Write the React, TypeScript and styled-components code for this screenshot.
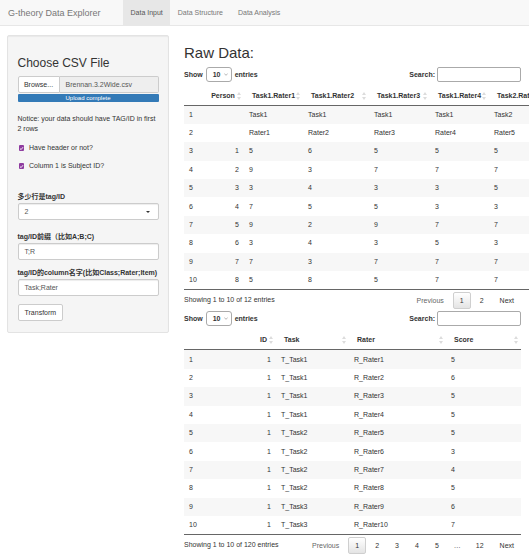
import React from "react";
import styled, { createGlobalStyle, css } from "styled-components";

const GlobalStyle = createGlobalStyle`
  html, body {
    margin: 0;
    padding: 0;
    overflow: hidden;
    background: #fff;
    font-family: "Liberation Sans", Helvetica, Arial, "Noto Sans CJK SC", sans-serif;
    font-size: 7px;
    color: #333;
  }
  * { box-sizing: border-box; }
`;

const Navbar = styled.nav`
  display: flex;
  align-items: stretch;
  height: 26px;
  background: #f8f8f8;
  border-bottom: 1px solid #e7e7e7;
`;

const Brand = styled.div`
  display: flex;
  align-items: center;
  padding-left: 8px;
  width: 123px;
  font-size: 9px;
  color: #777;
`;

const NavTab = styled.div<{ $active?: boolean }>`
  display: flex;
  align-items: center;
  padding: 0 7.5px;
  font-size: 7px;
  color: #777;
  ${(p) =>
    p.$active &&
    css`
      background: #e7e7e7;
      color: #555;
    `}
`;

const Page = styled.div`
  display: flex;
  align-items: flex-start;
  padding: 9px 8px 0 7px;
`;

const WellPanel = styled.aside`
  flex: none;
  width: 162px;
  background: #f5f5f5;
  border: 1px solid #e3e3e3;
  border-radius: 2px;
  box-shadow: inset 0 1px 1px rgba(0, 0, 0, 0.05);
  padding: 9.5px 9.5px 11px;
  display: flex;
  flex-direction: column;
`;

const PanelTitle = styled.h3`
  margin: 11px 0 6.5px;
  font-size: 12px;
  font-weight: 500;
  line-height: 13px;
  color: #333;
`;

const FileRow = styled.div`
  display: flex;
  height: 17px;
`;

const BrowseButton = styled.div`
  width: 42px;
  display: flex;
  align-items: center;
  justify-content: center;
  background: #fff;
  border: 1px solid #ccc;
  border-radius: 2px 0 0 2px;
  color: #333;
`;

const FileName = styled.div`
  flex: 1;
  display: flex;
  align-items: center;
  padding-left: 6px;
  background: #eee;
  border: 1px solid #ccc;
  border-left: none;
  border-radius: 0 2px 2px 0;
  color: #555;
`;

const Progress = styled.div`
  margin-top: 1px;
  height: 8px;
  background: #337ab7;
  border-radius: 1px;
  color: #fff;
  font-size: 6px;
  line-height: 8px;
  text-align: center;
`;

const Notice = styled.p`
  margin: 12px 0 0;
  line-height: 10px;
`;

const CheckRow = styled.label<{ $gap: number }>`
  display: flex;
  align-items: center;
  margin-top: ${(p) => p.$gap}px;
  line-height: 10px;
`;

const CheckBox = styled.span`
  width: 5.5px;
  height: 5.5px;
  margin: 0 5px 0 1px;
  border-radius: 1px;
  background: #8e3b9f;
  display: inline-flex;
  align-items: center;
  justify-content: center;
`;

const FieldLabel = styled.div<{ $top: number }>`
  margin-top: ${(p) => p.$top}px;
  margin-bottom: 1px;
  font-weight: bold;
  line-height: 10px;
  font-family: "Liberation Sans", Arial, "Noto Sans CJK SC", sans-serif;
`;

const TextBox = styled.div`
  position: relative;
  height: 17px;
  display: flex;
  align-items: center;
  padding: 0 6px;
  background: #fff;
  border: 1px solid #ccc;
  border-radius: 2px;
  box-shadow: inset 0 1px 1px rgba(0, 0, 0, 0.075);
  color: #555;
`;

const Caret = styled.span`
  position: absolute;
  right: 8px;
  top: 7px;
  width: 0;
  height: 0;
  border-left: 2.5px solid transparent;
  border-right: 2.5px solid transparent;
  border-top: 2.5px solid #333;
`;

const Button = styled.button`
  align-self: flex-start;
  margin-top: 8px;
  height: 17px;
  padding: 0 6px;
  background: #fff;
  border: 1px solid #ccc;
  border-radius: 2px;
  font-family: inherit;
  font-size: 7px;
  color: #333;
`;

const Main = styled.main`
  flex: none;
  width: 337px;
  margin-left: 15px;
  display: flex;
  flex-direction: column;
`;

const Heading = styled.h2`
  margin: 10px 0 5px;
  font-size: 15px;
  font-weight: 500;
  line-height: 16.5px;
  color: #333;
`;

const ControlRow = styled.div<{ $top?: number }>`
  display: flex;
  align-items: center;
  justify-content: space-between;
  height: 15px;
  margin-top: ${(p) => p.$top ?? 0}px;
`;

const LengthControl = styled.div`
  display: flex;
  align-items: center;
  font-weight: bold;
  gap: 3px;
`;

const SmallSelect = styled.div`
  width: 26px;
  height: 15px;
  display: flex;
  align-items: center;
  justify-content: space-between;
  padding: 0 3px 0 6px;
  border: 1px solid #aaa;
  border-radius: 3px;
  background: #fff;
  font-weight: bold;
`;

const SearchControl = styled.div`
  display: flex;
  align-items: center;
  gap: 2px;
  font-weight: bold;
`;

const SearchInput = styled.div`
  width: 84px;
  height: 15px;
  border: 1px solid #aaa;
  border-radius: 2px;
  background: #fff;
`;

const TableWrap = styled.div`
  margin-top: 5px;
`;

const Table = styled.table`
  border-collapse: separate;
  border-spacing: 0;
  table-layout: fixed;
  border-bottom: 1px solid #666;
`;

const Th = styled.th<{ $align?: string }>`
  position: relative;
  height: 19px;
  padding: 0 9px 0 8px;
  line-height: 10px;
  font-weight: bold;
  text-align: ${(p) => p.$align ?? "left"};
  white-space: nowrap;
  border-bottom: 1px solid #666;
  overflow: hidden;
`;

const SortIcon = styled.svg`
  position: absolute;
  right: 3px;
  top: 5px;
`;

const Tr = styled.tr<{ $odd: boolean }>`
  height: 18.4px;
  background: ${(p) => (p.$odd ? "#f7f7f7" : "#fff")};
  & + & > td {
    border-top: 1px solid #ddd;
  }
`;

const Td = styled.td<{ $align?: string }>`
  padding: 0 5px;
  line-height: 10px;
  vertical-align: middle;
  white-space: nowrap;
  text-align: ${(p) => p.$align ?? "left"};
  color: #333;
`;

const Footer = styled.div`
  display: flex;
  justify-content: space-between;
  align-items: flex-start;
`;

const Info = styled.div`
  padding-top: 5px;
  line-height: 10px;
`;

const Pagination = styled.div`
  display: flex;
  gap: 2px;
  margin-top: 2px;
`;

const PageButton = styled.span<{ $current?: boolean; $disabled?: boolean }>`
  height: 17px;
  padding: 0 6px;
  display: flex;
  align-items: center;
  border: 1px solid transparent;
  border-radius: 2px;
  color: ${(p) => (p.$disabled ? "#666" : "#333")};
  ${(p) =>
    p.$current &&
    css`
      border-color: #cfcfcf;
      background: linear-gradient(#fff, #e4e4e4);
    `}
`;

const Ellipsis = styled.span`
  height: 17px;
  padding: 0 6px;
  display: flex;
  align-items: center;
  color: #333;
`;

const Sort = () => (
  <SortIcon width="4" height="8" viewBox="0 0 4 8">
    <path d="M2 0 L4 3 L0 3 Z" fill="#dcdcdc" />
    <path d="M2 8 L4 5 L0 5 Z" fill="#dcdcdc" />
  </SortIcon>
);

const Chevron = () => (
  <svg width="4" height="3" viewBox="0 0 4 3">
    <path d="M0.3 0.5 L2 2.3 L3.7 0.5" fill="none" stroke="#888" strokeWidth="0.6" />
  </svg>
);

const Check = () => (
  <svg width="5" height="5" viewBox="0 0 5 5">
    <path d="M1 2.6 L2.1 3.6 L4 1.2" fill="none" stroke="#fff" strokeWidth="0.9" />
  </svg>
);

type Col = { label: string; width: number; align?: string; headAlign?: string };

const DataTable = ({ cols, rows }: { cols: Col[]; rows: (string | number)[][] }) => (
  <TableWrap>
    <Table style={{ width: cols.reduce((s, c) => s + c.width, 0) }}>
      <colgroup>
        {cols.map((c, i) => (
          <col key={i} style={{ width: c.width }} />
        ))}
      </colgroup>
      <thead>
        <tr>
          {cols.map((c, i) => (
            <Th key={i} $align={c.headAlign}>
              {c.label}
              {i > 0 && <Sort />}
            </Th>
          ))}
        </tr>
      </thead>
      <tbody>
        {rows.map((r, ri) => (
          <Tr key={ri} $odd={ri % 2 === 0}>
            {r.map((v, ci) => (
              <Td key={ci} $align={cols[ci].align}>
                {v}
              </Td>
            ))}
          </Tr>
        ))}
      </tbody>
    </Table>
  </TableWrap>
);

const TableControls = ({ top }: { top?: number }) => (
  <ControlRow $top={top}>
    <LengthControl>
      Show
      <SmallSelect>
        10 <Chevron />
      </SmallSelect>
      entries
    </LengthControl>
    <SearchControl>
      Search:
      <SearchInput />
    </SearchControl>
  </ControlRow>
);

const scores: number[][] = [
  [5, 6, 5, 5, 5, 3, 4, 5, 6, 7, 3, 3],
  [9, 3, 7, 7, 7, 5, 5, 7, 7, 5, 5, 7],
  [3, 4, 3, 3, 5, 3, 5, 5, 6, 5, 1, 6],
  [7, 5, 5, 3, 3, 1, 4, 3, 5, 3, 3, 5],
  [9, 2, 9, 7, 7, 7, 3, 7, 2, 7, 5, 3],
  [3, 4, 3, 5, 3, 3, 6, 3, 4, 5, 1, 2],
  [7, 3, 7, 7, 7, 5, 5, 7, 5, 5, 5, 6],
  [5, 8, 5, 7, 7, 5, 5, 4, 3, 2, 1, 1],
];

const taskOf = (i: number) => `Task${Math.floor(i / 4) + 1}`;

const rawCols: Col[] = [
  { label: "", width: 19 },
  { label: "Person", width: 41, align: "right", headAlign: "center" },
  ...Array.from({ length: 12 }, (_, i) => ({
    label: `${taskOf(i)}.Rater${i + 1}`,
    width: [59, 66, 61, 59][i] ?? 61,
  })),
];

const rawRows: (string | number)[][] = [
  [1, "", ...Array.from({ length: 12 }, (_, i) => taskOf(i))],
  [2, "", ...Array.from({ length: 12 }, (_, i) => `Rater${i + 1}`)],
  ...scores.map((s, i) => [i + 3, i + 1, ...s]),
];

const longCols: Col[] = [
  { label: "", width: 56 },
  { label: "ID", width: 36, align: "right", headAlign: "right" },
  { label: "Task", width: 73 },
  { label: "Rater", width: 97 },
  { label: "Score", width: 75 },
];

const longRows: (string | number)[][] = Array.from({ length: 10 }, (_, i) => [
  i + 1,
  1,
  `T_${taskOf(i)}`,
  `R_Rater${i + 1}`,
  scores[0][i],
]);

export default function App() {
  return (
    <>
      <GlobalStyle />
      <Navbar>
        <Brand>G-theory Data Explorer</Brand>
        <NavTab $active>Data Input</NavTab>
        <NavTab>Data Structure</NavTab>
        <NavTab>Data Analysis</NavTab>
      </Navbar>
      <Page>
        <WellPanel>
          <PanelTitle>Choose CSV File</PanelTitle>
          <FileRow>
            <BrowseButton>Browse...</BrowseButton>
            <FileName>Brennan.3.2Wide.csv</FileName>
          </FileRow>
          <Progress>Upload complete</Progress>
          <Notice>Notice: your data should have TAG/ID in first 2 rows</Notice>
          <CheckRow $gap={9}>
            <CheckBox>
              <Check />
            </CheckBox>
            Have header or not?
          </CheckRow>
          <CheckRow $gap={8}>
            <CheckBox>
              <Check />
            </CheckBox>
            Column 1 is Subject ID?
          </CheckRow>
          <FieldLabel $top={21}>多少行是tag/ID</FieldLabel>
          <TextBox>
            2<Caret />
          </TextBox>
          <FieldLabel $top={12}>tag/ID前缀（比如A;B;C)</FieldLabel>
          <TextBox>T;R</TextBox>
          <FieldLabel $top={8}>tag/ID的column名字(比如Class;Rater;Item)</FieldLabel>
          <TextBox>Task;Rater</TextBox>
          <Button>Transform</Button>
        </WellPanel>
        <Main>
          <Heading>Raw Data:</Heading>
          <TableControls />
          <DataTable cols={rawCols} rows={rawRows} />
          <Footer>
            <Info>Showing 1 to 10 of 12 entries</Info>
            <Pagination>
              <PageButton $disabled>Previous</PageButton>
              <PageButton $current>1</PageButton>
              <PageButton>2</PageButton>
              <PageButton>Next</PageButton>
            </Pagination>
          </Footer>
          <TableControls top={2} />
          <DataTable cols={longCols} rows={longRows} />
          <Footer>
            <Info>Showing 1 to 10 of 120 entries</Info>
            <Pagination>
              <PageButton $disabled>Previous</PageButton>
              <PageButton $current>1</PageButton>
              <PageButton>2</PageButton>
              <PageButton>3</PageButton>
              <PageButton>4</PageButton>
              <PageButton>5</PageButton>
              <Ellipsis>…</Ellipsis>
              <PageButton>12</PageButton>
              <PageButton>Next</PageButton>
            </Pagination>
          </Footer>
        </Main>
      </Page>
    </>
  );
}
